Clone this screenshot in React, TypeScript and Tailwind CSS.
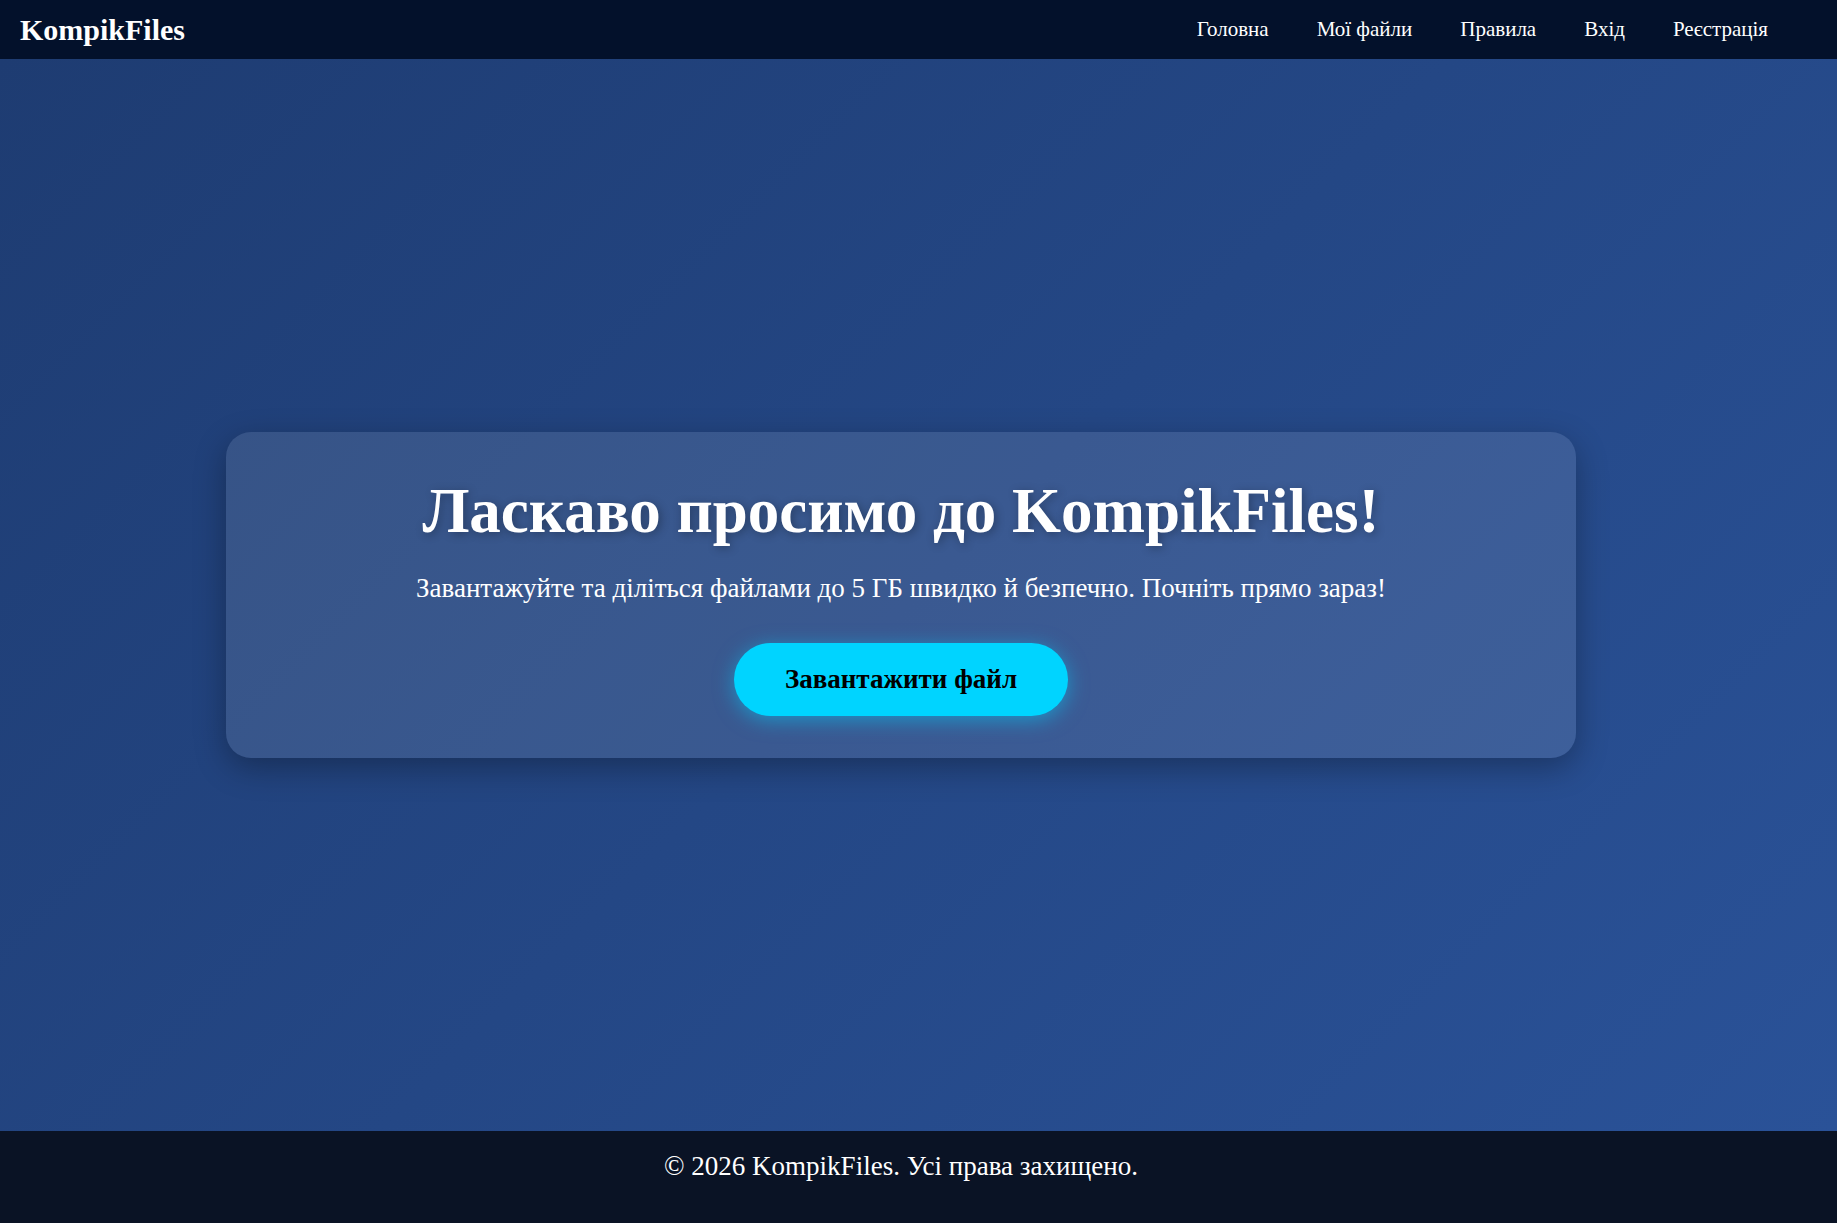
import React from 'react'

const navLinks = ['Головна', 'Мої файли', 'Правила', 'Вхід', 'Реєстрація']

export default function App() {
  return (
    <div className="flex min-h-screen flex-col font-['Liberation_Serif','Times_New_Roman',serif] text-white">
      {/* Header */}
      <header className="flex h-[59px] items-center justify-between bg-[#03112b] pl-[20px] pr-[69px]">
        <div className="text-[30px] font-bold leading-none">KompikFiles</div>
        <nav className="flex items-center gap-[48px] text-[21px]">
          {navLinks.map((link) => (
            <a key={link} href="#" className="text-white no-underline">
              {link}
            </a>
          ))}
        </nav>
      </header>

      {/* Hero */}
      <main className="flex flex-1 items-center justify-center bg-[linear-gradient(135deg,#1e3c72,#2a5298)] pr-[35px]">
        <div className="flex h-[326px] w-[1350px] flex-col items-center rounded-[25px] bg-white/10 pt-[42px] shadow-[0_10px_32px_rgba(0,0,0,0.3)]">
          <h1 className="text-[63px] font-bold leading-[1.2] [text-shadow:2px_2px_10px_rgba(0,0,0,0.3)]">
            Ласкаво просимо до KompikFiles!
          </h1>
          <p className="mt-[21px] text-[27px] leading-[1.3]">
            Завантажуйте та діліться файлами до 5 ГБ швидко й безпечно. Почніть прямо зараз!
          </p>
          <button className="mt-[37px] flex h-[73px] w-[334px] items-center justify-center rounded-full bg-[#00d4ff] text-[27px] font-bold text-black shadow-[0_4px_20px_rgba(0,212,255,0.5)]">
            Завантажити файл
          </button>
        </div>
      </main>

      {/* Footer */}
      <footer className="flex h-[92px] justify-center bg-[#0a1325] pr-[35px] pt-[18px]">
        <p className="text-[27px] leading-[1.3]">© 2026 KompikFiles. Усі права захищено.</p>
      </footer>
    </div>
  )
}
